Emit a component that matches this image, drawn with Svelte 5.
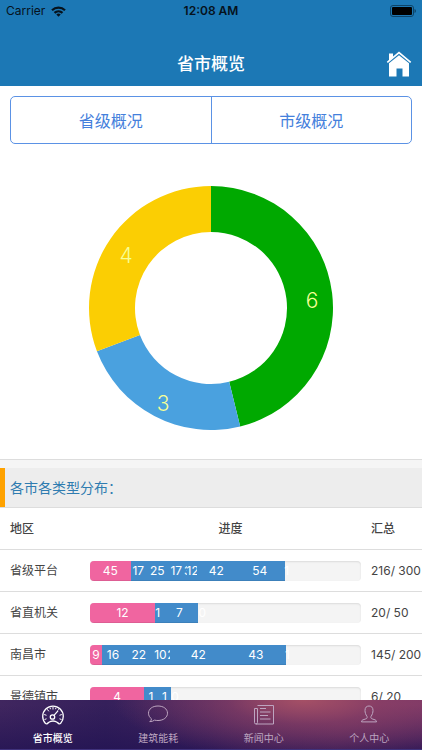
<script>
	const slices = [
		{ value: 6, color: '#00a900', x: 223, y: 122 },
		{ value: 3, color: '#4aa1df', x: 74, y: 225 },
		{ value: 4, color: '#fbce03', x: 37, y: 77 }
	];

	const rows = [
		{ name: '省级平台', used: 216, total: 300, parts: [45, 17, 25, 17, 3, 12, 42, 54, 1] },
		{ name: '省直机关', used: 20, total: 50, parts: [12, 1, 7, 0] },
		{ name: '南昌市', used: 145, total: 200, parts: [9, 16, 22, 10, 2, 42, 43, 1] },
		{ name: '景德镇市', used: 6, total: 20, parts: [4, 1, 1, 0] }
	];

	const center = 122;
	const outer = 122;
	const inner = 76;
	const sum = slices.reduce((n, s) => n + s.value, 0);

	function point(radius, share) {
		const angle = share * Math.PI * 2;
		return `${center + radius * Math.sin(angle)} ${center - radius * Math.cos(angle)}`;
	}

	let passed = 0;
	const arcs = slices.map((slice) => {
		const from = passed / sum;
		passed += slice.value;
		const to = passed / sum;
		return {
			...slice,
			d: `M${point(outer, from)} A${outer} ${outer} 0 0 1 ${point(outer, to)} L${point(inner, to)} A${inner} ${inner} 0 0 0 ${point(inner, from)}Z`
		};
	});
</script>

<svelte:head>
	<title>省市概览</title>
</svelte:head>

<div class="app">
	<header>
		<div class="status">
			<span class="carrier">
				Carrier
				<svg width="15" height="11" viewBox="0 0 15 11" aria-hidden="true">
					<g fill="none" stroke="#06121c" stroke-width="2.2">
						<path d="M1 4.2a9.3 9.3 0 0 1 13 0" />
						<path d="M3.500 6.900a5.800 5.800 0 0 1 8 0" />
					</g>
					<path d="M7.500 10.800 5.300 8.600a3.200 3.200 0 0 1 4.400 0z" fill="#06121c" />
				</svg>
			</span>
			<span class="time">12:08 AM</span>
			<svg class="battery" width="26" height="12" viewBox="0 0 26 12" aria-hidden="true">
				<rect x=".5" y=".5" width="23" height="11" rx="2.5" fill="none" stroke="#0d4468" />
				<rect x="2" y="2" width="20" height="8" rx="1" />
				<path d="M24.5 4q1.5.4 1.5 2t-1.5 2z" fill="#0d4468" />
			</svg>
		</div>
		<div class="nav">
			<h1>省市概览</h1>
			<a class="home" href="#home" aria-label="首页">
				<svg width="26" height="26" viewBox="0 0 26 26" aria-hidden="true">
					<path d="M3 2.500h4v3.700L3 10z" fill="#fff" />
					<path d="M1.300 11.300 13 1.700l11.700 9.600" fill="none" stroke="#fff" stroke-width="1.700" />
					<path d="M3 12.200 13 4.200l10 8V25.500h-6.500V17.500h-6v8H3z" fill="#fff" />
				</svg>
			</a>
		</div>
	</header>

	<main>
		<div class="switch">
			<button type="button">省级概况</button>
			<button type="button">市级概况</button>
		</div>

		<div class="chart">
			<svg width="244" height="244" viewBox="0 0 244 244" role="img" aria-label="类型分布">
				{#each arcs as arc}
					<path d={arc.d} fill={arc.color} />
				{/each}
				{#each arcs as arc}
					<text x={arc.x} y={arc.y}>{arc.value}</text>
				{/each}
			</svg>
		</div>

		<section>
			<h2>各市各类型分布：</h2>
			<table>
				<thead>
					<tr>
						<th class="area">地区</th>
						<th class="progress">进度</th>
						<th class="total">汇总</th>
					</tr>
				</thead>
				<tbody>
					{#each rows as row}
						<tr>
							<td class="area">{row.name}</td>
							<td class="progress">
								<div class="track">
									{#each row.parts as part}
										<div class="part" style="width: {(part / row.total) * 100}%">{part}</div>
									{/each}
								</div>
							</td>
							<td class="total">{row.used}/ {row.total}</td>
						</tr>
					{/each}
				</tbody>
			</table>
		</section>
	</main>

	<nav class="tabs">
		<a href="#overview" class="active">
			<svg width="24" height="22" viewBox="0 0 24 22" aria-hidden="true">
				<path d="M4.500 19.500A10.300 10.300 0 1 1 19.500 19.500Q18 20.500 16.500 18.500 12 15.500 7.500 18.500 6 20.500 4.500 19.500z" fill="none" stroke="#fff" stroke-width="1.300" />
				<path d="M12 3v2.500M6.300 5.300l1.500 2M17.700 5.300l-1 1.300M3.200 10.500l2.300.8M20.800 10.500l-2.300.8M3.500 15.500l2-.7M20.500 15.500l-2-.7M9 3.700l.5 1.500M15 3.700l-.5 1.500" stroke="#fff" />
				<circle cx="11.500" cy="13" r="2.200" fill="none" stroke="#fff" stroke-width="1.300" />
				<path d="m13 11.300 4-4.500" stroke="#fff" stroke-width="1.200" />
			</svg>
			<span>省市概览</span>
		</a>
		<a href="#energy">
			<svg width="24" height="22" viewBox="0 0 24 22" aria-hidden="true">
				<path d="M5.500 14.800C3.500 13.500 2.500 11.300 2.500 9.200c0-4.200 4-7.200 9.500-7.200s9.500 3 9.500 7.200-4 7.300-9.500 7.300c-1.200 0-2.400-.1-3.400-.4-1.200.9-2.800 1.500-4.800 1.600 1-.8 1.600-1.700 1.700-2.900z" fill="none" stroke="currentColor" />
			</svg>
			<span>建筑能耗</span>
		</a>
		<a href="#news">
			<svg width="24" height="22" viewBox="0 0 24 22" aria-hidden="true">
				<path d="M5.500 1.500h16v18.500H4q-1.500 0-1.500-1.500V4.500h3M5.500 4.500v14q0 1.500-1.500 1.500M8 4.500h6M8 8h10.500M8 11.500h8M8 15h10.500" fill="none" stroke="currentColor" />
			</svg>
			<span>新闻中心</span>
		</a>
		<a href="#me">
			<svg width="24" height="22" viewBox="0 0 24 22" aria-hidden="true">
				<path d="M10 12.500C8.700 10.500 8 8.500 8 6.500 8 3.500 9.500 2 12 2s4 1.500 4 4.500c0 2-.7 4-2 6-.4 1.400 0 2 1.200 2.400l3 1q1.300.5 1.300 2H4.500q0-1.500 1.300-2l3-1c1.200-.4 1.600-1 1.200-2.400z" fill="none" stroke="currentColor" />
			</svg>
			<span>个人中心</span>
		</a>
	</nav>
</div>

<style>
	:global(body) {
		margin: 0;
		background: #fff;
	}

	.app {
		display: flex;
		flex-direction: column;
		height: 100vh;
		font-family: Inter, "Noto Sans CJK SC", sans-serif;
		font-size: 12px;
		color: #444;
	}

	header {
		background: #1c78b5;
		color: #fff;
	}

	.status {
		display: grid;
		grid-template-columns: 1fr auto 1fr;
		align-items: center;
		height: 22px;
		padding: 0 6px;
		line-height: 22px;
		color: #06121c;
	}

	.carrier {
		display: flex;
		align-items: center;
		gap: 6px;
	}

	.time {
		font-weight: 600;
	}

	.battery {
		justify-self: end;
	}

	.nav {
		display: grid;
		grid-template-columns: 1fr auto 1fr;
		align-items: center;
		height: 44px;
		padding: 20px 10px 0;
	}

	h1 {
		grid-column: 2;
		margin: 0;
		font-size: 17px;
		line-height: 24px;
		font-weight: 500;
	}

	.home {
		justify-self: end;
		height: 26px;
	}

	main {
		flex: 1;
		min-height: 0;
		overflow-x: hidden;
		overflow-y: auto;
		scrollbar-width: none;
	}

	.switch {
		display: flex;
		margin: 10px 10px 0;
		border: 1px solid #5b92e5;
		border-radius: 5px;
	}

	.switch button {
		flex: 1;
		height: 46px;
		padding: 0;
		border: none;
		background: none;
		color: #4480dc;
		font-family: inherit;
		font-size: 16px;
	}

	.switch button + button {
		border-left: 1px solid #5b92e5;
	}

	.chart {
		display: flex;
		justify-content: center;
		padding: 42px 0 29px;
	}

	.chart text {
		fill: #f6ff96;
		font-size: 21px;
		font-weight: 300;
		text-anchor: middle;
	}

	section {
		border-top: 1px solid #ddd;
		padding-top: 8px;
		background: #f5f5f5;
	}

	h2 {
		margin: 0;
		padding-left: 5px;
		border-left: 5px solid #ffa200;
		background: #ededed;
		color: #2f7cb0;
		font-size: 14px;
		font-weight: 400;
		line-height: 39px;
	}

	table {
		width: 100%;
		table-layout: fixed;
		border-collapse: collapse;
		background: #fff;
	}

	th,
	td {
		height: 41px;
		padding: 0;
		border-top: 1px solid #ddd;
		line-height: 20px;
		text-align: left;
		white-space: nowrap;
	}

	th {
		font-weight: 500;
		color: #444;
	}

	.area {
		width: 80px;
		padding-left: 10px;
	}

	th.progress {
		text-align: center;
	}

	td.progress {
		padding-right: 10px;
	}

	.total {
		width: 51px;
	}

	.track {
		display: flex;
		height: 20px;
		border-radius: 4px;
		background: #f4f4f4;
		box-shadow: inset 0 1px 2px rgba(0, 0, 0, 0.1);
		overflow: hidden;
	}

	/* each part covers the overflowing label of the part before it */
	.part {
		position: relative;
		flex: none;
		background: #428bca;
		box-shadow: inset 0 -1px 0 rgba(0, 0, 0, 0.08);
		color: #fff;
		text-align: center;
	}

	.part:first-child {
		background: #f065a0;
	}

	.tabs {
		display: flex;
		height: 50px;
		background:
			radial-gradient(ellipse 190px 60px at 72% 0, #a55066 0%, rgba(143, 66, 101, 0.6) 40%, rgba(110, 45, 100, 0) 100%),
			linear-gradient(transparent 10%, rgba(32, 18, 82, 0.7)),
			linear-gradient(90deg, #40265f 0%, #35205b 25%, #482660 50%, #7b3766 80%, #7b3768 100%);
		border-bottom: 1px solid #40327c;
		box-sizing: border-box;
	}

	.tabs a {
		flex: 1;
		display: flex;
		flex-direction: column;
		align-items: center;
		gap: 4px;
		padding-top: 4px;
		color: #bda5c0;
		font-size: 10px;
		line-height: 16px;
		text-decoration: none;
	}

	.tabs .active {
		color: #fff;
		font-weight: 500;
	}
</style>
